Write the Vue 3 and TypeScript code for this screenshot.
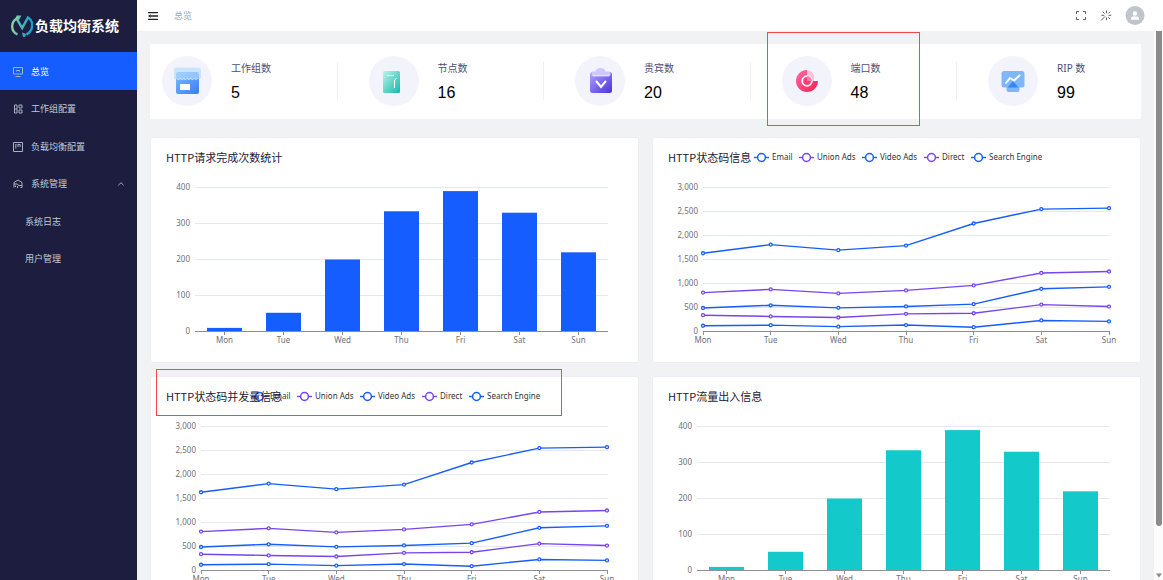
<script setup lang="ts">
interface Series { name: string; color: string; values: number[] }
interface Chart { title: string; kind: 'bar' | 'line'; color: string; marked: boolean }

const days = ['Mon', 'Tue', 'Wed', 'Thu', 'Fri', 'Sat', 'Sun']
const blue = '#165dff'
const purple = '#7745f0'

const menu = [
  { label: '总览', icon: 'monitor', active: true, sub: false },
  { label: '工作组配置', icon: 'blocks', active: false, sub: false },
  { label: '负载均衡配置', icon: 'board', active: false, sub: false },
  { label: '系统管理', icon: 'house', active: false, sub: false },
  { label: '系统日志', icon: '', active: false, sub: true },
  { label: '用户管理', icon: '', active: false, sub: true },
]

const stats = [
  { label: '工作组数', value: 5, icon: 'shop', marked: false },
  { label: '节点数', value: 16, icon: 'node', marked: false },
  { label: '贵宾数', value: 20, icon: 'clipboard', marked: false },
  { label: '端口数', value: 48, icon: 'target', marked: true },
  { label: 'RIP 数', value: 99, icon: 'screen', marked: false },
]

const charts: Chart[] = [
  { title: 'HTTP请求完成次数统计', kind: 'bar', color: blue, marked: false },
  { title: 'HTTP状态码信息', kind: 'line', color: blue, marked: false },
  { title: 'HTTP状态码并发量信息', kind: 'line', color: blue, marked: true },
  { title: 'HTTP流量出入信息', kind: 'bar', color: '#14c9c9', marked: false },
]

const barValues = [10, 52, 200, 334, 390, 330, 220]
const barTicks = [0, 100, 200, 300, 400]
const lineTicks = [0, 500, 1000, 1500, 2000, 2500, 3000]

const series: Series[] = [
  { name: 'Email', color: blue, values: [120, 132, 101, 134, 90, 230, 210] },
  { name: 'Union Ads', color: purple, values: [220, 182, 191, 234, 290, 330, 310] },
  { name: 'Video Ads', color: blue, values: [150, 232, 201, 154, 190, 330, 410] },
  { name: 'Direct', color: purple, values: [320, 332, 301, 334, 390, 330, 320] },
  { name: 'Search Engine', color: blue, values: [820, 932, 901, 934, 1290, 1330, 1320] },
]
const legendX = [102, 147, 210, 272, 319]

const baseY = 194.5
const plotHeight = 144
const yAt = (value: number, max: number) => baseY - (value / max) * plotHeight

const stacked = series.map((s, i) => ({
  color: s.color,
  points: s.values.map((_, d) => {
    const total = series.slice(0, i + 1).reduce((sum, item) => sum + item.values[d], 0)
    return { x: 51 + (d * 406) / 6, y: yAt(total, 3000) }
  }),
}))
const toPolyline = (points: { x: number; y: number }[]) => points.map(p => `${p.x},${p.y}`).join(' ')
</script>

<template>
  <div class="layout">
    <aside class="sidebar">
      <div class="brand">
        <svg class="brand-mark" viewBox="0 0 22 22" aria-hidden="true">
          <defs>
            <linearGradient id="mark" x1="0" y1="0" x2="1" y2="0">
              <stop offset="0" stop-color="#8fd0a0" />
              <stop offset=".5" stop-color="#3fb9bd" />
              <stop offset="1" stop-color="#159cd0" />
            </linearGradient>
          </defs>
          <path d="M6.500 19.500C-.5 16-.3 7.500 5.500 3.500L11.200 13 17 2.500C22.800 6 22.800 15.500 15.500 19.500" fill="none" stroke="url(#mark)" stroke-width="2.400" />
          <path d="M5.500.5h5L8 5 5 3.500zM11 17.500l4.500 1.500-1.500 3h-2z" fill="url(#mark)" />
        </svg>
        <span>负载均衡系统</span>
      </div>
      <nav class="menu">
        <a v-for="item in menu" :key="item.label" href="#" class="menu-item" :class="{ active: item.active, sub: item.sub }">
          <svg v-if="item.icon" class="menu-icon" viewBox="0 0 10 10" aria-hidden="true">
            <path v-if="item.icon === 'monitor'" d="M.5.5h9v6.500h-9zM2.500 9.500h5M3.500 4.500V3.500h3v1" />
            <path v-else-if="item.icon === 'blocks'" d="M1.500 1h2.500v8H1.500zM6 1h3v3H6zM6 6h3v3H6zM2 5h2" />
            <path v-else-if="item.icon === 'board'" d="M.5.5h9v9h-9zM2.800 2.500v4M5 2.500v2.500M7.200 2.500v2.500M2.500 2.500h1M4.700 2.500h2.500" />
            <path v-else d="M1 8.500V3.500L5 1l4 2.500v5H7.500M1 5h3.500l1 1.500H9M2.500 6.500V8M4.500 7v2" />
          </svg>
          <span>{{ item.label }}</span>
          <svg v-if="item.icon === 'house'" class="caret" viewBox="0 0 6 4" aria-hidden="true"><path d="M.3 3.300 3 .7l2.700 2.600" /></svg>
        </a>
      </nav>
    </aside>

    <div class="page">
      <header class="topbar">
        <button class="icon-button" type="button" aria-label="折叠菜单">
          <svg class="fold" viewBox="0 0 10 8" aria-hidden="true">
            <path d="M0 .5h10M3 4h7M0 7.500h10" fill="none" stroke="#20232a" stroke-width="1.400" />
            <path d="M2.800 2.300v3.400L0 4z" fill="#20232a" />
          </svg>
        </button>
        <span class="crumb">总览</span>
        <div class="tools">
          <button class="icon-button" type="button" aria-label="全屏">
            <svg class="tool" viewBox="0 0 12 12" aria-hidden="true"><path d="M1.500 4V1.500H4M8 1.500h2.500V4M10.500 7v2.500H8M4 9.500H1.500V7" /></svg>
          </button>
          <button class="icon-button" type="button" aria-label="主题">
            <svg class="tool" viewBox="0 0 12 12" aria-hidden="true"><path d="M6.500.5v2.700M6.500 7.500v2.700M1.500 5.300h2.700M8.500 5.300h2.700M2.800 1.800l1.700 1.700M8.300 7.300 10 9M10 1.800 8.300 3.500M5 6.500 1 10.500" /></svg>
          </button>
          <button class="icon-button" type="button" aria-label="用户">
            <svg class="avatar" viewBox="0 0 20 20" aria-hidden="true">
              <circle cx="10" cy="9.500" r="9.500" fill="#c0c4cc" />
              <circle cx="10" cy="7.500" r="2.300" fill="#fff" />
              <path d="M6 13.700v-1.200Q6 10.500 8 10.500h4q2 0 2 2v1.200z" fill="#fff" />
            </svg>
          </button>
        </div>
      </header>

      <div class="body">
        <main class="content">
          <section class="stats">
            <div v-for="stat in stats" :key="stat.label" class="stat">
              <svg class="stat-icon" viewBox="0 0 50 50" aria-hidden="true">
                <circle cx="25" cy="25" r="25" fill="#f3f4fb" />
                <g v-if="stat.icon === 'shop'">
                  <defs><linearGradient id="shop" x1="0" y1="0" x2="1" y2="1"><stop offset="0" stop-color="#7cbcff" /><stop offset="1" stop-color="#3a7df2" /></linearGradient></defs>
                  <rect x="14" y="16" width="23" height="22" rx="2" fill="url(#shop)" />
                  <path d="M14 11.500h22q3 0 3 3v7q0 2-2 2-1.500 0-2-1-1.500 2-3.500 0-2 2-3.500 0-2 2-4 0-2 2-3.500 0-2 2-4 0-1 1-2 1-2.500 0-2.500-2v-7q0-3 2-3z" fill="#b4dcff" fill-opacity=".65" />
                  <path d="M15 22.500q1.700 2 3.400 0 1.700 2 3.500 0 1.700 2 3.500 0 1.700 2 3.500 0 1.700 2 3.500 0 1.700 2 3.300 0" fill="none" stroke="#e4f3ff" stroke-width=".8" />
                  <rect x="18" y="28" width="10" height="6" rx=".5" fill="#fff" />
                </g>
                <g v-else-if="stat.icon === 'node'">
                  <defs><linearGradient id="node" x1="0" y1="0" x2="1" y2="1"><stop offset="0" stop-color="#b9f5e8" /><stop offset="1" stop-color="#12b9ae" /></linearGradient></defs>
                  <rect x="14" y="15" width="17" height="22" rx="1.500" fill="url(#node)" />
                  <path d="M18 19.500h7M25.500 32v-8l2-1.500" fill="none" stroke="#fff" stroke-width="1" />
                </g>
                <g v-else-if="stat.icon === 'clipboard'">
                  <defs><linearGradient id="clip" x1="0" y1="0" x2="1" y2="1"><stop offset="0" stop-color="#b0a4ff" /><stop offset="1" stop-color="#4c2fdc" /></linearGradient></defs>
                  <rect x="15" y="16" width="22" height="21" rx="2.500" fill="url(#clip)" />
                  <path d="M17 15.500h3.500q.5-3.500 5-3.500t5 3.500H34q1.500 0 1.500 1.500v1.500q0 2-2 2h-15q-2 0-2-2V17q0-1.500.5-1.500z" fill="#cfc8ff" />
                  <path d="M18 19.500h16" stroke="#eeebff" stroke-width=".8" />
                  <path d="m21.500 25.500 4.500 5.500 4.500-5.500" fill="none" stroke="#fff" stroke-width="2" stroke-linecap="round" />
                </g>
                <g v-else-if="stat.icon === 'target'">
                  <defs><linearGradient id="target" x1="0" y1="0" x2="1" y2="1"><stop offset="0" stop-color="#ff6aa9" /><stop offset="1" stop-color="#f91f4f" /></linearGradient></defs>
                  <path d="M25 14a11 11 0 1 0 11 11H25z" fill="url(#target)" />
                  <path d="M25 14q7 .5 7 8v3h-7z" fill="#fbc3d9" />
                  <circle cx="25" cy="25" r="4.800" fill="none" stroke="#fff" stroke-width="1.800" />
                  <circle cx="25.500" cy="25" r="3" fill="#f83d75" />
                  <path d="M25 20a5 5 0 0 1 5 5h-5z" fill="#ff7daa" />
                </g>
                <g v-else>
                  <rect x="18.500" y="30" width="13" height="6" rx="2" fill="#7db6ff" />
                  <rect x="13.500" y="15" width="23" height="16.500" rx="2.500" fill="#80b7fb" />
                  <path d="m25 25 5.500 6.500h-11z" fill="#3586ff" />
                  <path d="m18 27 4-5 4 2.500 5.500-5" fill="none" stroke="#fff" stroke-width="1.900" stroke-linecap="round" stroke-linejoin="round" />
                </g>
              </svg>
              <dl class="stat-text">
                <dt>{{ stat.label }}</dt>
                <dd>{{ stat.value }}</dd>
              </dl>
              <span v-if="stat.marked" class="mark mark-stat"></span>
            </div>
          </section>

          <section class="charts">
            <article v-for="chart in charts" :key="chart.title" class="card">
              <svg class="plot" viewBox="0 0 489 226" role="img" :aria-label="chart.title">
                <template v-if="chart.kind === 'bar'">
                  <g v-for="tick in barTicks" :key="tick">
                    <line v-if="tick" class="grid-line" x1="45" x2="458" :y1="Math.floor(yAt(tick, 400)) + 0.5" :y2="Math.floor(yAt(tick, 400)) + 0.5" />
                    <text class="axis-text end" x="40" :y="yAt(tick, 400) + 2">{{ tick }}</text>
                  </g>
                  <rect v-for="(value, i) in barValues" :key="i" :x="57 + i * 59" :y="yAt(value, 400)" width="35" :height="baseY - yAt(value, 400)" :fill="chart.color" />
                  <line class="axis-line" x1="45" x2="458" y1="194.500" y2="194.500" />
                  <g v-for="(day, i) in days" :key="day">
                    <line class="axis-line" :x1="74.5 + i * 59" :x2="74.5 + i * 59" y1="195" y2="198" />
                    <text class="axis-text" :x="74.5 + i * 59" y="206">{{ day }}</text>
                  </g>
                </template>
                <template v-else>
                  <g v-for="tick in lineTicks" :key="tick">
                    <line v-if="tick" class="grid-line" x1="51" x2="458" :y1="yAt(tick, 3000)" :y2="yAt(tick, 3000)" />
                    <text class="axis-text end" x="46" :y="yAt(tick, 3000) + 2">{{ tick.toLocaleString('en-US') }}</text>
                  </g>
                  <line class="axis-line" x1="51" x2="458" y1="194.500" y2="194.500" />
                  <g v-for="(day, i) in days" :key="day">
                    <line class="axis-line" :x1="Math.floor(51 + i * 406 / 6) + 0.5" :x2="Math.floor(51 + i * 406 / 6) + 0.5" y1="195" y2="198" />
                    <text class="axis-text" :x="51 + i * 406 / 6" y="206">{{ day }}</text>
                  </g>
                  <g v-for="(line, i) in stacked" :key="i" :stroke="line.color">
                    <polyline :points="toPolyline(line.points)" fill="none" stroke-width="1.400" />
                    <circle v-for="(p, d) in line.points" :key="d" :cx="p.x" :cy="p.y" r="1.500" fill="#fff" stroke-width="1.300" />
                  </g>
                  <g v-for="(item, i) in series" :key="item.name">
                    <line :x1="legendX[i]" :x2="legendX[i] + 15" y1="20.500" y2="20.500" :stroke="item.color" stroke-width="1.400" />
                    <circle :cx="legendX[i] + 7.5" cy="20.500" r="3.900" fill="#fff" :stroke="item.color" stroke-width="1.500" />
                    <text class="legend-text" :x="legendX[i] + 18" y="23">{{ item.name }}</text>
                  </g>
                </template>
              </svg>
              <h2>{{ chart.title }}</h2>
              <span v-if="chart.marked" class="mark mark-title"></span>
            </article>
          </section>
        </main>
        <div class="scrollbar" aria-hidden="true">
          <span class="thumb"></span>
          <svg viewBox="0 0 6 5"><path d="M0 .5h6L3 4.500z" fill="#8b8b8b" /></svg>
        </div>
      </div>
    </div>
  </div>
</template>

<style>
body {
  margin: 0;
}
</style>

<style scoped>
.layout {
  display: grid;
  grid-template-columns: 137px minmax(0, 1fr);
  height: 100vh;
  overflow: hidden;
  background: #f1f2f4;
  font-family: "Noto Sans", "Noto Sans CJK SC", sans-serif;
}
.sidebar {
  background: #1d1e3f;
}
.brand {
  display: flex;
  align-items: center;
  gap: 2px;
  height: 52px;
  padding-left: 11px;
  box-sizing: border-box;
  color: #fff;
  font-size: 14px;
  font-weight: 700;
  line-height: 20px;
  white-space: nowrap;
}
.brand-mark {
  width: 22px;
  height: 22px;
  flex: none;
}
.menu {
  display: grid;
  grid-template-rows: repeat(6, 1fr);
  height: 225px;
}
.menu-item {
  display: flex;
  align-items: center;
  gap: 8px;
  padding: 2px 13px 0;
  color: #bfcbd9;
  font-size: 9px;
  line-height: 14px;
  text-decoration: none;
}
.menu-item.active {
  background: #165dff;
  color: #fff;
}
.menu-item.sub {
  padding-left: 25px;
}
.menu-icon {
  width: 10px;
  height: 10px;
  fill: none;
  stroke: #a5b3bd;
  stroke-width: 1;
}
.caret {
  width: 6px;
  height: 4px;
  margin-left: auto;
  fill: none;
  stroke: #bfcbd9;
  stroke-width: .8;
}
.page {
  display: flex;
  flex-direction: column;
  min-width: 0;
  min-height: 0;
}
.topbar {
  display: flex;
  flex: none;
  align-items: center;
  height: 31px;
  padding: 0 18px 0 11px;
  background: #fff;
}
.icon-button {
  display: flex;
  padding: 0;
  border: 0;
  background: none;
}
.fold {
  width: 10px;
  height: 8px;
}
.crumb {
  margin-left: 16px;
  color: #97a8be;
  font-size: 9px;
  line-height: 14px;
}
.tools {
  display: flex;
  align-items: center;
  gap: 13px;
  margin-left: auto;
}
.tool {
  width: 12px;
  height: 12px;
  fill: none;
  stroke: #5a5e66;
  stroke-width: 1;
}
.avatar {
  width: 20px;
  height: 20px;
}
.body {
  display: flex;
  flex: 1;
  min-height: 0;
}
.content {
  flex: 1;
  min-width: 0;
  padding: 13px;
}
.stats {
  display: grid;
  grid-template-columns: repeat(4, 27fr) 20fr;
  padding: 12px 0 13px 12px;
  margin-bottom: 18px;
  background: #fff;
}
.stat {
  position: relative;
  display: flex;
  align-items: center;
}
.stat:not(:last-child)::after {
  content: "";
  width: 1px;
  height: 38px;
  margin: 0 31px 0 auto;
  background: #f0f1f8;
}
.stat-icon {
  width: 50px;
  height: 50px;
  flex: none;
}
.stat-text {
  margin: 0 0 0 19px;
}
.stat-text dt {
  color: #4b5072;
  font-size: 10px;
  line-height: 24px;
}
.stat-text dd {
  margin: 0;
  color: #000;
  font: 16px/26px "Liberation Sans", Arial, sans-serif;
}
.charts {
  display: grid;
  grid-template-columns: repeat(2, minmax(0, 1fr));
  gap: 13px;
}
.card {
  position: relative;
  display: grid;
  border-radius: 3px;
  background: #fff;
  box-shadow: inset 0 0 0 1px #eceef3;
}
.plot {
  grid-area: 1 / 1;
  display: block;
  width: 100%;
}
.card h2 {
  grid-area: 1 / 1;
  z-index: 1;
  margin: 12px 16px;
  align-self: start;
  color: #1d2033;
  font: 400 11px/16px "Noto Sans CJK SC", sans-serif;
}
.grid-line {
  stroke: #e4e8f3;
  stroke-width: 1;
}
.axis-line {
  stroke: #8d8f98;
  stroke-width: 1;
}
.axis-text {
  fill: #6e7079;
  font-size: 8px;
  text-anchor: middle;
}
.axis-text.end {
  text-anchor: end;
}
.legend-text {
  fill: #333;
  font-size: 8px;
}
.mark {
  position: absolute;
  z-index: 2;
  box-sizing: border-box;
  border: 1px solid #f5484b;
  pointer-events: none;
}
.mark-stat {
  top: -24px;
  left: -15px;
  width: 153px;
  height: 94px;
}
.mark-title {
  top: -7px;
  left: 6px;
  width: 406px;
  height: 47px;
}
.scrollbar {
  display: flex;
  flex: none;
  flex-direction: column;
  align-items: center;
  justify-content: space-between;
  width: 9px;
  padding-bottom: 2px;
  background: #fcfcfc;
}
.thumb {
  width: 6px;
  height: 90.5%;
  border-radius: 0 0 3px 3px;
  background: #8b8b8b;
}
.scrollbar svg {
  width: 6px;
  height: 5px;
}
</style>
